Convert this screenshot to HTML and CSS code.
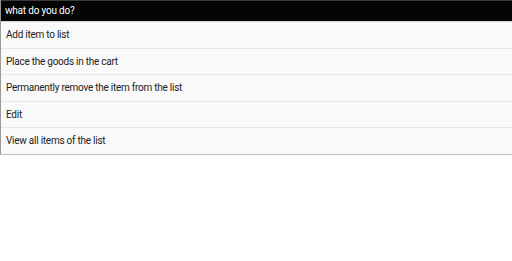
FILE: index.html
```html
<!DOCTYPE html>
<html lang="en">
<head>
    <meta charset="UTF-8">
    <meta name="viewport" content="width=device-width, initial-scale=1.0">
    <title>what do you do?</title>
    <link rel="stylesheet" href="styles.css">
</head>
<body>
    <div class="dialog">
        <div class="title">what do you do?</div>
        <ul class="list">
            <li class="item">Add item to list</li>
            <li class="item">Place the goods in the cart</li>
            <li class="item">Permanently remove the item from the list</li>
            <li class="item">Edit</li>
            <li class="item">View all items of the list</li>
        </ul>
    </div>
</body>
</html>
```
FILE: styles.css
```css
*{
    margin: 0;
    padding: 0;
}
body{
    background: #ffffff;
    font-family: Roboto, "Open Sans", sans-serif;
}
.dialog{
    border-left: 1px solid #9a9a9a;
    border-bottom: 1px solid #bdbdbd;
    background: #f9f9f9;
}
.title{
    height: 20px;
    line-height: 20px;
    padding-left: 4px;
    background: #050505;
    border-top: 1px solid #3c3c3c;
    border-bottom: 1px solid #d6d6d6;
    color: #ffffff;
    font-size: 10px;
    letter-spacing: -0.2px;
}
.list{
    list-style: none;
}
.item{
    height: 25.5px;
    line-height: 25.5px;
    padding-left: 5px;
    border-bottom: 1px solid #e6e6e6;
    color: #222222;
    font-size: 10px;
    letter-spacing: -0.25px;
}
.item:last-child{
    border-bottom: none;
}
```
